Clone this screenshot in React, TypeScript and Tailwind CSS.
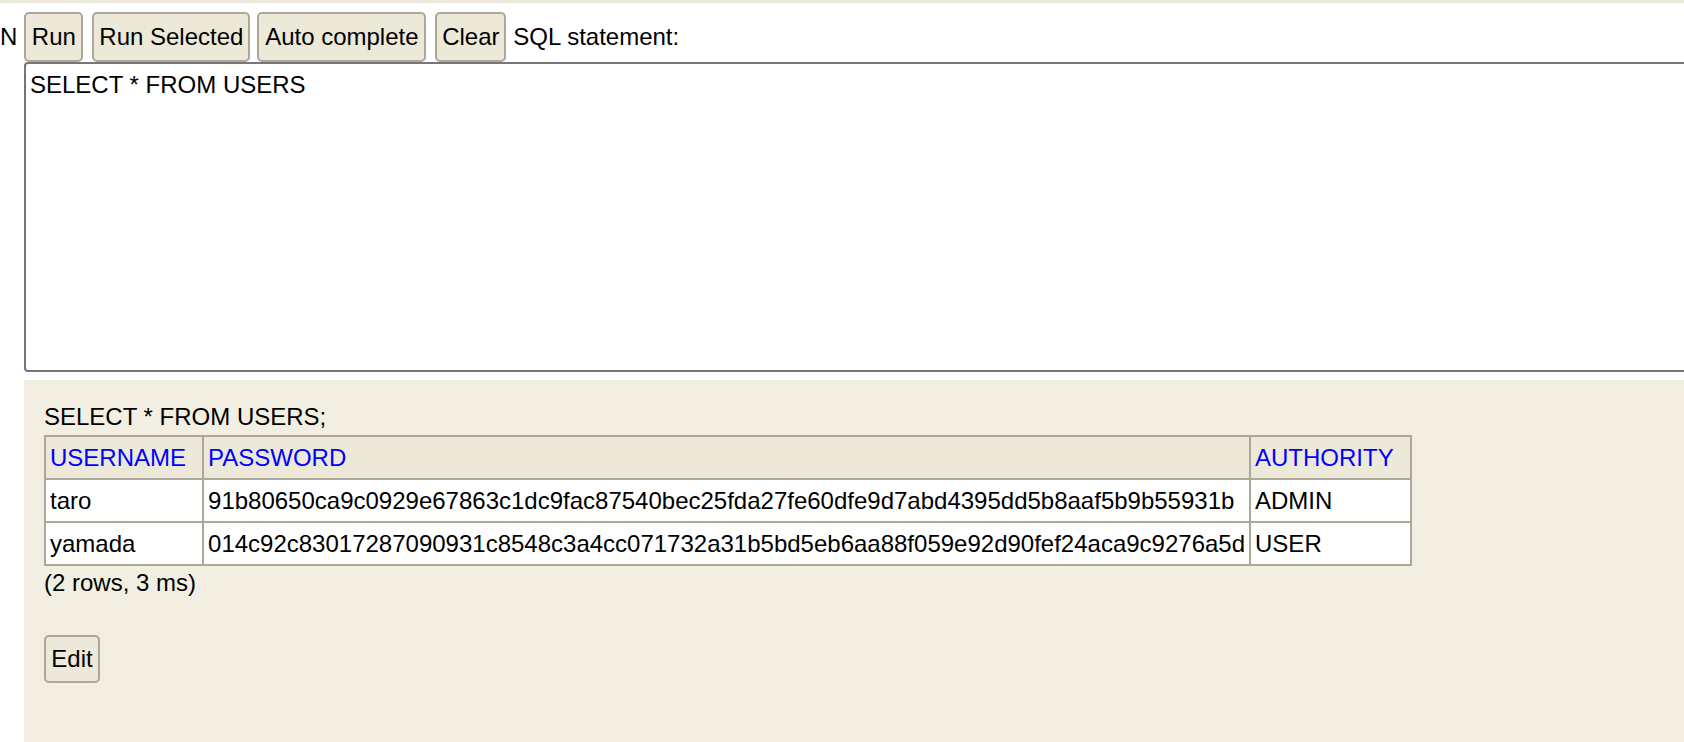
import type { ReactNode } from "react";

const FONT = "font-['Liberation_Sans',Arial,Helvetica,sans-serif]";

const HASH_TARO =
	"91b80650ca9c0929e67863c1dc9fac87540bec25fda27fe60dfe9d7abd4395dd5b8aaf5b9b55931b";
const HASH_YAMADA =
	"014c92c83017287090931c8548c3a4cc071732a31b5bd5eb6aa88f059e92d90fef24aca9c9276a5d";

const rows = [
	{ username: "taro", password: HASH_TARO, authority: "ADMIN" },
	{ username: "yamada", password: HASH_YAMADA, authority: "USER" },
];

function ToolButton({
	children,
	className,
}: {
	children: ReactNode;
	className: string;
}) {
	return (
		<button
			type="button"
			className={`flex h-[50px] shrink-0 items-center justify-center rounded-[5px] border-2 border-[#aca899] bg-[#ece9d8] text-[24px] leading-[28px] text-black ${className}`}
		>
			{children}
		</button>
	);
}

const cell = "border-2 border-[#aca899] py-[4px] pl-[4px] leading-[33px]";

export default function App() {
	return (
		<div
			className={`${FONT} flex min-h-screen flex-col overflow-hidden bg-white text-[24px] leading-[28px] text-black`}
		>
			{/* frame edge */}
			<div className="h-[3px] bg-[#ebe8da]" />

			{/* toolbar */}
			<div className="mt-[9px] flex h-[50px] items-center whitespace-nowrap">
				<span>N</span>
				<ToolButton className="ml-[7px] w-[59px]">Run</ToolButton>
				<ToolButton className="ml-[9px] w-[158px]">Run Selected</ToolButton>
				<ToolButton className="ml-[7px] w-[169px]">Auto complete</ToolButton>
				<ToolButton className="ml-[9px] w-[71px]">Clear</ToolButton>
				<span className="ml-[7px]">SQL statement:</span>
			</div>

			<textarea
				defaultValue="SELECT * FROM USERS"
				spellCheck={false}
				className={`${FONT} ml-[24px] h-[310px] w-[1680px] shrink-0 resize-none rounded-[4px] border-2 border-[#767676] bg-white px-[4px] pt-[7px] text-[24px] leading-[28px] text-black outline-none`}
			/>

			{/* result panel */}
			<div className="ml-[24px] mt-[8px] flex-1 bg-[#f2efe2] pl-[20px] pt-[23px]">
				<div>SELECT * FROM USERS;</div>
				<table className="mt-[4px] border-collapse border-2 border-[#aca899]">
					<thead>
						<tr>
							<th className={`${cell} bg-[#ece9d8] pr-[16px] text-left font-normal text-[#0000ff]`}>
								USERNAME
							</th>
							<th className={`${cell} bg-[#ece9d8] pr-[4px] text-left font-normal text-[#0000ff]`}>
								PASSWORD
							</th>
							<th className={`${cell} bg-[#ece9d8] pr-[16px] text-left font-normal text-[#0000ff]`}>
								AUTHORITY
							</th>
						</tr>
					</thead>
					<tbody>
						{rows.map((r) => (
							<tr key={r.username}>
								<td className={`${cell} bg-white pr-[16px]`}>{r.username}</td>
								<td className={`${cell} bg-white pr-[4px]`}>{r.password}</td>
								<td className={`${cell} bg-white pr-[16px]`}>{r.authority}</td>
							</tr>
						))}
					</tbody>
				</table>
				<div className="mt-[3px]">(2 rows, 3 ms)</div>
				<button
					type="button"
					className="mt-[38px] flex h-[48px] w-[56px] items-center justify-center rounded-[5px] border-2 border-[#aca899] bg-[#ece9d8] text-[24px] leading-[28px] text-black"
				>
					Edit
				</button>
			</div>
		</div>
	);
}
